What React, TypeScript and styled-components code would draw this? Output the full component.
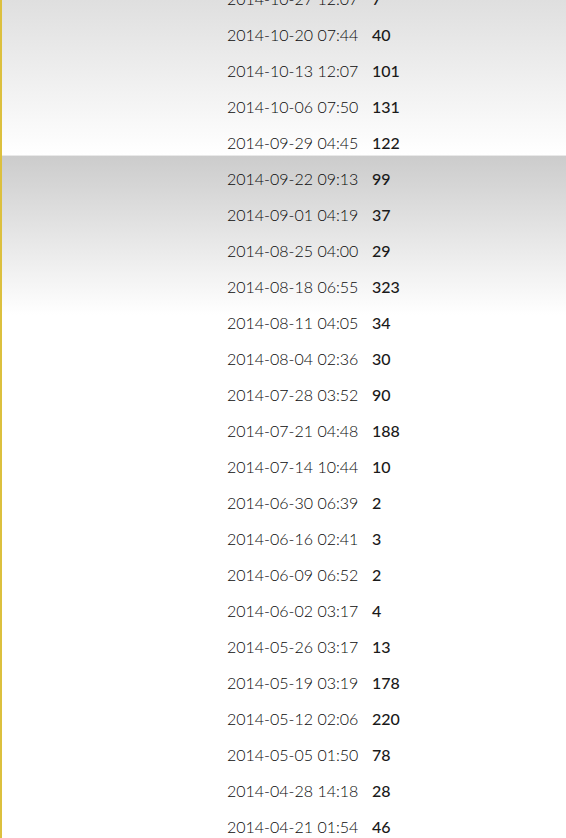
import React from "react";
import styled, { createGlobalStyle } from "styled-components";

const GlobalStyle = createGlobalStyle`
  html, body {
    margin: 0;
    padding: 0;
    background: #ffffff;
    overflow: hidden;
  }
`;

const Page = styled.div`
  min-height: 100vh;
  border-left: 2px solid #dcc03e;
  background-color: #ffffff;
  background-image:
    linear-gradient(to bottom, #dfdfdf 0%, #ffffff 100%),
    linear-gradient(to bottom, #e9e9e9 0px, #e9e9e9 1px, #cccccc 1px, #ffffff 100%);
  background-repeat: no-repeat;
  background-size: 100% 155px, 100% 160px;
  background-position: 0 0, 0 155px;
  overflow: hidden;
`;

const List = styled.div`
  display: flex;
  flex-direction: column;
  margin-top: -20px;
`;

const Row = styled.div`
  display: grid;
  grid-template-columns: 145px auto;
  align-items: center;
  height: 36px;
  padding-left: 225px;
  font-family: Lato, "Liberation Sans", sans-serif;
  font-size: 16px;
`;

const When = styled.span`
  font-weight: 300;
  color: #0a0a0a;
`;

const Count = styled.span`
  font-weight: 500;
  color: #1a1a1a;
`;

const rows: [string, number][] = [
  ["2014-10-27 12:07", 7],
  ["2014-10-20 07:44", 40],
  ["2014-10-13 12:07", 101],
  ["2014-10-06 07:50", 131],
  ["2014-09-29 04:45", 122],
  ["2014-09-22 09:13", 99],
  ["2014-09-01 04:19", 37],
  ["2014-08-25 04:00", 29],
  ["2014-08-18 06:55", 323],
  ["2014-08-11 04:05", 34],
  ["2014-08-04 02:36", 30],
  ["2014-07-28 03:52", 90],
  ["2014-07-21 04:48", 188],
  ["2014-07-14 10:44", 10],
  ["2014-06-30 06:39", 2],
  ["2014-06-16 02:41", 3],
  ["2014-06-09 06:52", 2],
  ["2014-06-02 03:17", 4],
  ["2014-05-26 03:17", 13],
  ["2014-05-19 03:19", 178],
  ["2014-05-12 02:06", 220],
  ["2014-05-05 01:50", 78],
  ["2014-04-28 14:18", 28],
  ["2014-04-21 01:54", 46],
];

const App = () => {
  return (
    <>
      <GlobalStyle />
      <Page>
        <List>
          {rows.map(([when, count]) => (
            <Row key={when}>
              <When>{when}</When>
              <Count>{count}</Count>
            </Row>
          ))}
        </List>
      </Page>
    </>
  );
};

export default App;
